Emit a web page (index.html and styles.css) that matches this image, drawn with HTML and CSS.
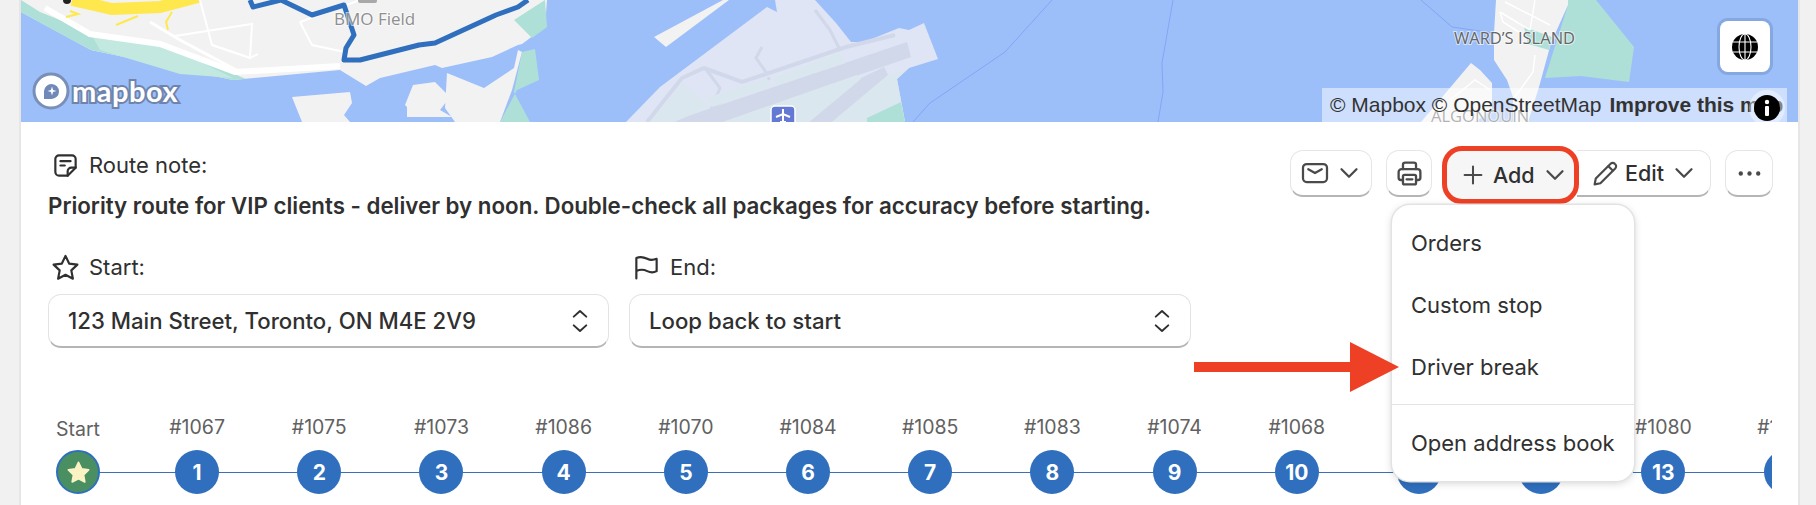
FILE: index.html
```html
<!DOCTYPE html>
<html lang="en">
<head>
    <meta charset="UTF-8">
    <meta name="viewport" content="width=device-width, initial-scale=1.0">
    <title>Route details</title>
    <link rel="stylesheet" href="styles.css">
</head>
<body>
    <div class="card">
        <div class="map">
            <svg class="map-art" viewBox="0 0 1777 122" width="1777" height="122">
                <g transform="translate(-21 0)">
                    <!-- main land -->
                    <polygon fill="#f2f2f2" points="21,12 91,50 233,80 340,70 366,86 380,78 435,65 442,68 492,57 518,45 522,44 545,27 547,0 21,0"/>
                    <polygon fill="#f2f2f2" points="292,97 350,92 352,103 344,115 350,122 302,122"/>
                    <polygon fill="#f2f2f2" points="407,107 405,105 413,85 435,82 450,97 440,110 452,117 407,117"/>
                    <polygon fill="#f2f2f2" points="445,108 447,73 484,88 514,68 518,50 522,52 512,90 500,122 455,122"/>
                    <polygon fill="#aee0d8" points="21,12 50,28 91,50 233,80 246,79 160,42 90,32 40,12 21,0"/>
                    <polygon fill="#c2e8e0" points="90,32 160,42 233,78 180,74 100,50"/>
                    <polygon fill="#aee0d8" points="522,52 535,49 539,80 517,90 500,122 530,122 514,92"/>
                    <polygon fill="#aee0d8" points="514,20 545,0 547,27 532,38"/>
                    <!-- roads -->
                    <g fill="none" stroke="#fff" stroke-width="2">
                        <polyline points="200,0 212,45 250,58 252,24 175,36"/>
                        <polyline points="212,45 250,58 258,54"/>
                        <polyline points="300,22 312,45 345,52"/>
                        <polyline points="300,22 360,0"/>
                        <polyline points="495,18 530,0"/>
                    </g>
                    <polyline fill="none" stroke="#fff" stroke-width="6" points="45,8 90,34 160,44 235,72 340,66"/>
                    <polyline fill="none" stroke="#fff" stroke-width="3" points="150,22 180,40 240,72"/>
                    <!-- yellow highway -->
                    <polyline fill="none" stroke="#ffe84d" stroke-width="12" points="72,0 112,9 160,7 198,-3"/>
                    <polyline fill="none" stroke="#ffe84d" stroke-width="2" points="70,11 78,14 66,17"/>
                    <polyline fill="none" stroke="#ffe84d" stroke-width="2" points="172,12 166,22 168,30"/>
                    <polyline fill="none" stroke="#ffe84d" stroke-width="2" points="138,16 116,25"/>
                    <circle cx="67" cy="0" r="4" fill="#222"/>
                    <!-- pier and airport -->
                    <polygon fill="#f2f2f2" points="654,37 723,0 729,0 666,47"/>
                    <polygon fill="#dfe5f5" points="626,122 660,87 767,7 777,12 775,0 815,0 836,23 851,42 864,42 899,28 909,30 924,23 938,59 909,68 897,79 905,122"/>
                    <polygon fill="#d1d8ea" points="670,122 907,42 911,57 723,122"/>
                    <polygon fill="#d1d8ea" points="809,122 861,78 884,67 888,75 832,122"/>
                    <polyline fill="none" stroke="#d1d8ea" stroke-width="4" points="647,122 682,78 704,68 742,82 846,47 895,35"/>
                    <polyline fill="none" stroke="#d1d8ea" stroke-width="3" points="705,68 720,88 712,107 770,78"/>
                    <polyline fill="none" stroke="#d1d8ea" stroke-width="3" points="815,10 830,30 840,50"/>
                    <polyline fill="none" stroke="#d1d8ea" stroke-width="3" points="762,47 756,58 766,72"/>
                    <polygon fill="#dae7ef" points="650,122 683,83 710,107 674,122"/>
                    <polygon fill="#dae7ef" points="706,98 767,78 771,87 712,107"/>
                    <polygon fill="#dae7ef" points="773,78 838,53 846,63 777,85"/>
                    <polygon fill="#dae7ef" points="723,122 857,75 861,79 809,122"/>
                    <polygon fill="#dae7ef" points="832,122 888,75 909,68 897,79 905,122"/>
                    <polygon fill="#aee0d8" points="867,118 901,102 905,122 867,122"/>
                    <!-- water lines -->
                    <g fill="none" stroke="#84a5f5" stroke-width="1">
                        <polyline points="1052,0 1005,52 930,103 913,122"/>
                        <polyline points="1173,0 1162,63 1163,92 1158,122"/>
                        <polyline points="1421,0 1452,27 1494,33"/>
                    </g>
                    <!-- ward's island -->
                    <polygon fill="#aee0d8" points="1568,5 1545,78 1581,76 1629,82 1634,47 1596,0 1560,0"/>
                    <polygon fill="#f2f2f2" points="1496,0 1568,0 1568,5 1551,43 1539,87 1528,122 1513,122 1513,97 1507,80 1494,60 1494,33"/>
                    <polygon fill="#aee0d8" points="1524,27 1552,37 1549,50 1528,44"/>
                    <polygon fill="#f2f2f2" points="1421,122 1471,63 1480,70 1492,83 1492,110 1475,122"/>
                    <g fill="none" stroke="#fff" stroke-width="1.5">
                        <polyline points="1500,12 1530,30"/>
                        <polyline points="1505,2 1550,25"/>
                        <polyline points="1535,0 1530,30"/>
                        <polyline points="1500,12 1503,22 1525,36"/>
                        <polyline points="1535,55 1533,72 1515,97"/>
                        <polyline points="1450,100 1475,80 1490,90"/>
                    </g>
                    <!-- route -->
                    <g fill="none" stroke="#2f6fbd" stroke-width="5" stroke-linejoin="round">
                        <polyline points="250,0 253,7 281,0 312,15 344,5 354,35 346,48 344,60 360,60 419,45 435,43 496,15 518,7 528,0"/>
                    </g>
                    <!-- map labels -->
                    <rect x="358" y="-6" width="19" height="9" rx="2" fill="#a8a8a8"/>
                    <text class="map-label map-label-poi" x="334" y="25">BMO Field</text>
                    <text class="map-label" x="1454" y="44">WARD’S ISLAND</text>
                    <text class="map-label" x="1431" y="122">ALGONQUIN</text>
                    <!-- airport pin -->
                    <rect x="771" y="106" width="24" height="24" rx="4" fill="#6379d3" stroke="#fff" stroke-width="1.5"/>
                    <path d="M783 109v13M776 117l7-3 7 3M780 122h6" fill="none" stroke="#fff" stroke-width="2"/>
                </g>
            </svg>

            <div class="mapbox-logo">
                <svg width="38" height="38" viewBox="0 0 38 38">
                    <circle cx="19" cy="19" r="17" fill="#fff" stroke="#7a8fb8" stroke-width="3"/>
                    <path d="M12 27v-8a7.500 7.500 0 1 1 7.500 8z" fill="#7089b8"/>
                    <path d="M20 14.500l1.100 3.400 3.400 1.100-3.400 1.100-1.100 3.400-1.100-3.400-3.400-1.100 3.400-1.100z" fill="#fff"/>
                </svg>
                <span class="mapbox-word">mapbox</span>
            </div>

            <button class="globe-btn">
                <svg width="28" height="28" viewBox="0 0 28 28" fill="none" stroke="#fff" stroke-width="1.100">
                    <circle cx="14" cy="14" r="13" fill="#000" stroke="none"/>
                    <ellipse cx="14" cy="14" rx="6" ry="13"/>
                    <path d="M14 1v26M2 9h24M2 19h24"/>
                </svg>
            </button>

            <div class="attribution">
                <span>© Mapbox © OpenStreetMap</span>
                <b>Improve this map</b>
            </div>
            <div class="info-btn">
                <svg width="26" height="26" viewBox="0 0 26 26">
                    <circle cx="13" cy="13" r="13" fill="#000"/>
                    <circle cx="13" cy="7" r="2.200" fill="#fff"/>
                    <rect x="11" y="11" width="4" height="10" rx="1" fill="#fff"/>
                </svg>
            </div>
        </div>

        <div class="details">
            <div class="top-row">
                <div class="note">
                    <div class="field-label">
                        <svg class="icon" viewBox="0 0 20 20" fill="none" stroke="#303030" stroke-width="1.500" stroke-linecap="round" stroke-linejoin="round">
                            <path d="M11.500 17H5.500A2.500 2.500 0 0 1 3 14.500V5.500A2.500 2.500 0 0 1 5.500 3h9A2.500 2.500 0 0 1 17 5.500V11.500z"/>
                            <path d="M6.500 7h7M6.500 10h3M11.500 17v-3a2.500 2.500 0 0 1 2.500-2.500h3"/>
                        </svg>
                        <span>Route note:</span>
                    </div>
                    <p class="note-text">Priority route for VIP clients - deliver by noon. Double-check all packages for accuracy before starting.</p>
                </div>

                <div class="actions">
                    <button class="btn btn-mail">
                        <svg class="icon icon-mail" viewBox="0 0 20 20" fill="none" stroke="#4a4a4a" stroke-width="1.500" stroke-linecap="round" stroke-linejoin="round">
                            <rect x="2" y="4" width="16" height="12" rx="2.500"/>
                            <path d="M5.500 7.500 10 10l4.500-2.500"/>
                        </svg>
                        <svg class="chev" viewBox="0 0 16 16"><path d="M3 5.500 8 10.500 13 5.500"/></svg>
                    </button>
                    <button class="btn btn-print">
                        <svg class="icon" viewBox="0 0 20 20" fill="none" stroke="#4a4a4a" stroke-width="1.600" stroke-linecap="round" stroke-linejoin="round">
                            <path d="M5.500 7V4a1.500 1.500 0 0 1 1.500-1.500h6A1.500 1.500 0 0 1 14.500 4v3"/>
                            <path d="M5.500 14.500H4A1.500 1.500 0 0 1 2.500 13V9A2 2 0 0 1 4.500 7h11a2 2 0 0 1 2 2v4a1.500 1.500 0 0 1-1.500 1.500h-1.500"/>
                            <rect x="5.500" y="11" width="9" height="6.500" rx="1"/>
                            <path d="M8 14h4"/>
                        </svg>
                    </button>
                    <div class="add-edit">
                        <div class="add-wrap">
                            <button class="btn btn-add">
                                <svg class="icon icon-plus" viewBox="0 0 20 20" fill="none" stroke="#4a4a4a" stroke-width="1.700" stroke-linecap="round"><path d="M10 3v14M3 10h14"/></svg>
                                <span>Add</span>
                                <svg class="chev" viewBox="0 0 16 16"><path d="M3 5.500 8 10.500 13 5.500"/></svg>
                            </button>
                            <div class="menu">
                                <div class="menu-item">Orders</div>
                                <div class="menu-item">Custom stop</div>
                                <div class="menu-item">Driver break</div>
                                <div class="menu-item menu-item-last">Open address book</div>
                            </div>
                        </div>
                        <button class="btn btn-edit">
                            <svg class="icon" viewBox="0 0 20 20" fill="none" stroke="#4a4a4a" stroke-width="1.500" stroke-linecap="round" stroke-linejoin="round">
                                <path d="M2.500 17.500l.8-4L13.500 3.300a2 2 0 0 1 2.900 0l.3.300a2 2 0 0 1 0 2.900L6.500 16.700z"/>
                                <path d="M12 5l3 3"/>
                            </svg>
                            <span>Edit</span>
                            <svg class="chev" viewBox="0 0 16 16"><path d="M3 5.500 8 10.500 13 5.500"/></svg>
                        </button>
                    </div>
                    <button class="btn btn-more">
                        <svg class="icon" viewBox="0 0 20 20" fill="#4a4a4a"><circle cx="4" cy="10" r="1.500"/><circle cx="10" cy="10" r="1.500"/><circle cx="16" cy="10" r="1.500"/></svg>
                    </button>
                </div>
            </div>

            <div class="endpoints">
                <div class="endpoint">
                    <div class="field-label">
                        <svg class="icon" viewBox="0 0 20 20" fill="none" stroke="#303030" stroke-width="1.500" stroke-linejoin="round">
                            <path d="M10 2l2.500 5.300 5.700.7-4.200 4 1.100 5.700L10 15l-5.100 2.700L6 12 1.800 8l5.700-.7z"/>
                        </svg>
                        <span>Start:</span>
                    </div>
                    <div class="select">
                        <span>123 Main Street, Toronto, ON M4E 2V9</span>
                        <svg class="updown" viewBox="0 0 16 24"><path d="M3 8.500 8 4l5 4.500M3 15.500 8 20l5-4.500"/></svg>
                    </div>
                </div>
                <div class="endpoint">
                    <div class="field-label">
                        <svg class="icon" viewBox="0 0 20 20" fill="none" stroke="#303030" stroke-width="1.500" stroke-linecap="round" stroke-linejoin="round">
                            <path d="M3 17.500V3.500c3-1.500 5.500-.5 7.500.5s4 1 6.500 0v8.500c-2.500 1.500-4.500 1-6.500 0s-4.500-1.500-7.500 0"/>
                        </svg>
                        <span>End:</span>
                    </div>
                    <div class="select">
                        <span>Loop back to start</span>
                        <svg class="updown" viewBox="0 0 16 24"><path d="M3 8.500 8 4l5 4.500M3 15.500 8 20l5-4.500"/></svg>
                    </div>
                </div>
            </div>

            <svg class="red-arrow" width="205" height="50" viewBox="0 0 205 50">
                <path d="M0 20h156V0l49 25-49 25V30H0z" fill="#ee4024"/>
            </svg>

            <div class="timeline">
                <div class="stop stop-start">
                    <div class="stop-label">Start</div>
                    <div class="stop-dot dot-start">
                        <svg width="27" height="27" viewBox="0 0 24 24"><path d="M12 3l2.800 5.800 6.200.9-4.500 4.400 1.100 6.300L12 17.500l-5.600 2.900 1.100-6.300L3 9.700l6.200-.9z" fill="#fbf3c4" stroke="#fbf3c4" stroke-width="1.500" stroke-linejoin="round"/></svg>
                    </div>
                </div>
                <div class="stop"><div class="stop-label">#1067</div><div class="stop-dot">1</div></div>
                <div class="stop"><div class="stop-label">#1075</div><div class="stop-dot">2</div></div>
                <div class="stop"><div class="stop-label">#1073</div><div class="stop-dot">3</div></div>
                <div class="stop"><div class="stop-label">#1086</div><div class="stop-dot">4</div></div>
                <div class="stop"><div class="stop-label">#1070</div><div class="stop-dot">5</div></div>
                <div class="stop"><div class="stop-label">#1084</div><div class="stop-dot">6</div></div>
                <div class="stop"><div class="stop-label">#1085</div><div class="stop-dot">7</div></div>
                <div class="stop"><div class="stop-label">#1083</div><div class="stop-dot">8</div></div>
                <div class="stop"><div class="stop-label">#1074</div><div class="stop-dot">9</div></div>
                <div class="stop"><div class="stop-label">#1068</div><div class="stop-dot">10</div></div>
                <div class="stop"><div class="stop-label">#1071</div><div class="stop-dot">11</div></div>
                <div class="stop"><div class="stop-label">#1072</div><div class="stop-dot">12</div></div>
                <div class="stop"><div class="stop-label">#1080</div><div class="stop-dot">13</div></div>
                <div class="stop"><div class="stop-label">#1069</div><div class="stop-dot">14</div></div>
            </div>
        </div>
    </div>
</body>
</html>
```

FILE: styles.css
```css
* {
    margin: 0;
    padding: 0;
    box-sizing: border-box;
}

body {
    height: 505px;
    overflow: hidden;
    background-color: #f1f1f1;
    color: #303030;
    font-family: Inter, "Liberation Sans", sans-serif;
    font-size: 22px;
}

.card {
    margin-left: 21px;
    margin-right: 18px;
    height: 505px;
    background-color: #fff;
    box-shadow: -2px 0 0 #e6e6e6, 2px 0 0 #e6e6e6;
}

/* map */
.map {
    position: relative;
    height: 122px;
    overflow: hidden;
    background-color: #9cbffa;
}

.map-art {
    display: block;
}

.map-label {
    font-family: "Open Sans", sans-serif;
    font-size: 16.500px;
    fill: #666;
    stroke: #fff;
    stroke-width: 2px;
    stroke-opacity: 0.6;
    paint-order: stroke;
}

.map-label-poi {
    font-size: 17px;
    fill: #8f8f8f;
}

.mapbox-logo {
    position: absolute;
    left: 11px;
    bottom: 12px;
    display: flex;
    align-items: center;
    gap: 2px;
}

.mapbox-word {
    font-family: Lato, sans-serif;
    font-weight: 700;
    font-size: 29px;
    line-height: 30px;
    color: #fff;
    -webkit-text-stroke: 4px #6f84ad;
    paint-order: stroke fill;
    letter-spacing: 0.5px;
}

.globe-btn {
    position: absolute;
    top: 21px;
    right: 28px;
    width: 50px;
    height: 51px;
    display: flex;
    align-items: center;
    justify-content: center;
    background-color: #fff;
    border: 0;
    border-radius: 8px;
    box-shadow: 0 0 0 3px #85a8e0;
}

.attribution {
    position: absolute;
    right: 11px;
    bottom: 0;
    width: 465px;
    height: 34px;
    padding-left: 8px;
    display: flex;
    align-items: center;
    gap: 8px;
    overflow: hidden;
    white-space: nowrap;
    background-color: rgba(255, 255, 255, 0.5);
    font-family: "Liberation Sans", sans-serif;
    font-size: 21px;
    color: #333;
}

.info-btn {
    position: absolute;
    right: 18px;
    bottom: 1px;
    width: 26px;
    height: 26px;
    border-radius: 50%;
    box-shadow: 0 0 0 5px rgba(255, 255, 255, 0.4);
}

/* lower part */
.details {
    position: relative;
    padding: 28px 25px 0 27px;
}

.top-row {
    display: flex;
    justify-content: space-between;
    align-items: flex-start;
    height: 68px;
}

.note {
    padding-top: 3px;
}

.icon {
    width: 29px;
    height: 29px;
    flex: none;
}

.icon-mail {
    width: 30px;
    height: 30px;
}

.icon-plus {
    width: 24px;
    height: 24px;
}

.field-label {
    display: flex;
    align-items: center;
    gap: 9px;
    height: 24px;
    padding-left: 3px;
    line-height: 24px;
}

.note-text {
    margin-top: 17px;
    font-size: 22.300px;
    font-weight: 600;
    line-height: 24px;
    white-space: nowrap;
}

.actions {
    display: flex;
    align-items: flex-start;
}

.btn {
    display: flex;
    align-items: center;
    height: 47px;
    background-color: #fff;
    border: 1.500px solid #e6e6e6;
    border-bottom: 2px solid #b5b5b5;
    border-radius: 13px;
    font-family: inherit;
    font-size: 21.500px;
    font-weight: 500;
    color: #303030;
}

.chev {
    width: 24px;
    height: 24px;
    flex: none;
    fill: none;
    stroke: #4a4a4a;
    stroke-width: 1.500;
    stroke-linecap: round;
    stroke-linejoin: round;
}

.btn-mail {
    width: 82px;
    padding-left: 9px;
    gap: 7px;
}

.btn-print {
    width: 46px;
    margin-left: 14px;
    justify-content: center;
}

.add-edit {
    display: flex;
    margin-left: 10px;
}

.add-wrap {
    position: relative;
}

.btn-add {
    position: relative;
    z-index: 2;
    width: 137px;
    height: 58px;
    margin-top: -4px;
    padding-left: 14px;
    gap: 8px;
    background-color: #f6f6f6;
    border: 5px solid #ee4024;
    border-radius: 20px;
}

.btn-edit {
    width: 134px;
    margin-left: -2px;
    padding-left: 14px;
    gap: 5px;
    border-left: 0;
    border-radius: 0 13px 13px 0;
}

.btn-edit .chev {
    margin-left: 3px;
}

.btn-more {
    width: 48px;
    margin-left: 14px;
    justify-content: center;
}

.menu {
    position: absolute;
    z-index: 3;
    top: 55px;
    left: -50px;
    width: 242px;
    height: 276px;
    padding-top: 7px;
    background-color: #fff;
    border-radius: 18px;
    box-shadow: 0 0 0 1.500px #e3e3e3, 0 2px 8px rgba(0, 0, 0, 0.18);
}

.menu-item {
    height: 62px;
    padding-left: 19px;
    line-height: 62px;
    white-space: nowrap;
}

.menu-item-last {
    height: 76px;
    margin-top: 6px;
    border-top: 1px solid #e3e3e3;
    line-height: 76px;
}

.endpoints {
    display: grid;
    grid-template-columns: 561px 562px;
    gap: 20px;
    margin-top: 37px;
}

.select {
    display: flex;
    align-items: center;
    justify-content: space-between;
    height: 54px;
    margin-top: 15px;
    padding: 0 18px 0 19px;
    background-color: #fff;
    border: 1.500px solid #e3e3e3;
    border-bottom: 2px solid #b5b5b5;
    border-radius: 13px;
    font-size: 22.200px;
    font-weight: 500;
}

.updown {
    width: 20px;
    height: 30px;
    fill: none;
    stroke: #303030;
    stroke-width: 1.600;
    stroke-linecap: round;
    stroke-linejoin: round;
}

.red-arrow {
    position: absolute;
    left: 1173px;
    top: 220px;
    z-index: 4;
}

/* stops along the route */
.timeline {
    position: relative;
    display: flex;
    width: 1724px;
    margin-top: 67px;
    overflow: hidden;
    font-size: 19.500px;
}

.timeline::before {
    content: "";
    position: absolute;
    left: 30px;
    right: 0;
    top: 56.500px;
    border-top: 1.500px solid #3a70b8;
}

.stop {
    position: relative;
    flex: 0 0 122.200px;
    display: flex;
    flex-direction: column;
    align-items: center;
}

.stop-start {
    flex-basis: 60px;
    margin-right: 28px;
}

.stop-label {
    height: 24px;
    line-height: 24px;
    color: #616161;
}

.stop-start .stop-label {
    margin-top: 2px;
    margin-bottom: -2px;
}

.stop-dot {
    display: flex;
    align-items: center;
    justify-content: center;
    width: 44px;
    height: 44px;
    margin-top: 11px;
    border-radius: 50%;
    background-color: #2f6fbd;
    color: #fff;
    font-size: 21px;
    font-weight: 700;
}

.dot-start {
    background-color: #4a8f62;
    border: 2px solid #2f6fbd;
}
```
